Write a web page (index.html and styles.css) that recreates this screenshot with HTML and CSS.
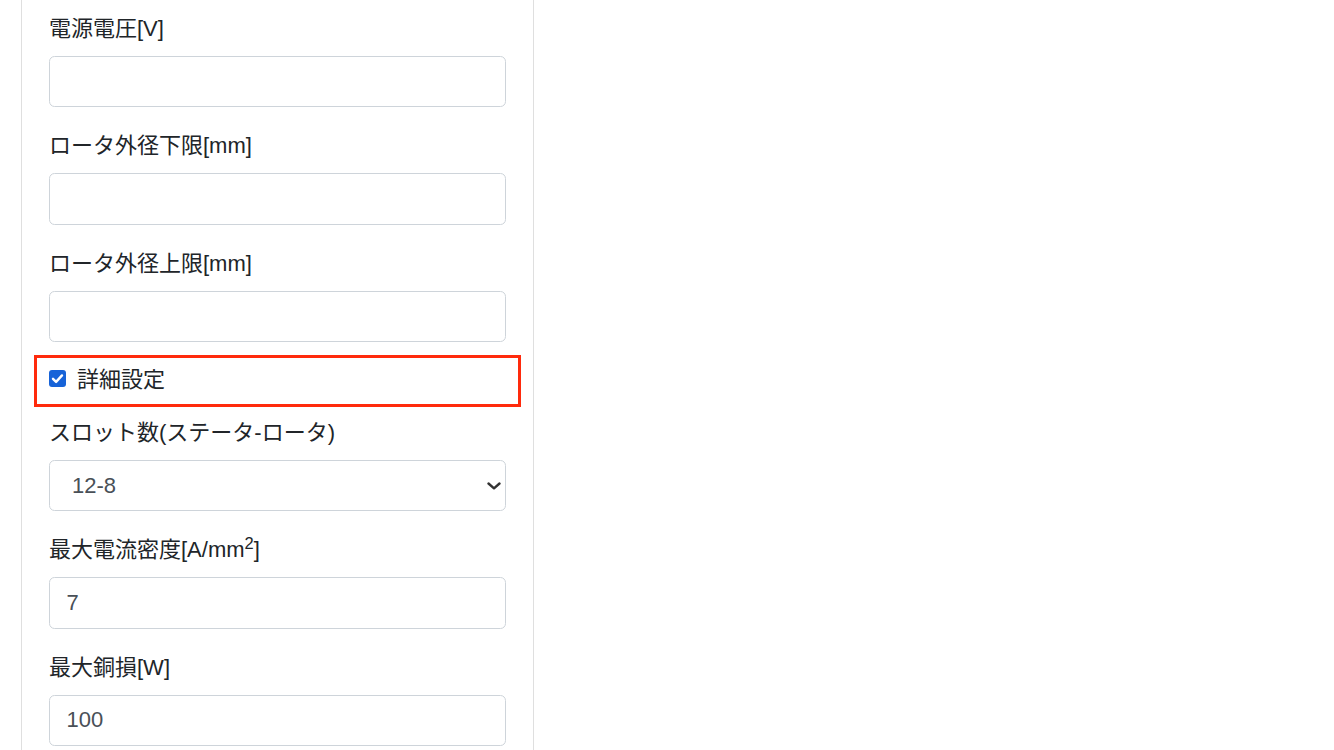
FILE: index.html
```html
<!DOCTYPE html>
<html lang="ja">
<head>
<meta charset="utf-8">
<title>設定</title>
<link rel="stylesheet" href="styles.css">
</head>
<body>
<div class="panel">
  <div class="form-group">
    <label class="field-label">電源電圧[V]</label>
    <input class="form-control" type="text" value="">
  </div>
  <div class="form-group">
    <label class="field-label">ロータ外径下限[mm]</label>
    <input class="form-control" type="text" value="">
  </div>
  <div class="form-group">
    <label class="field-label">ロータ外径上限[mm]</label>
    <input class="form-control" type="text" value="">
  </div>
  <div class="form-check">
    <span class="check-box">
      <svg viewBox="0 0 17 17" width="17" height="17"><path d="M4 8.8 L7.1 11.9 L13 5.4" fill="none" stroke="#fff" stroke-width="2.4" stroke-linecap="round" stroke-linejoin="round"/></svg>
    </span>
    <span class="check-label">詳細設定</span>
    <span class="highlight"></span>
  </div>
  <div class="form-group">
    <label class="field-label">スロット数(ステータ-ロータ)</label>
    <div class="select-wrap">
      <div class="form-control select-control">12-8</div>
      <svg class="chevron" viewBox="0 0 14 8" width="14" height="8"><path d="M1.5 1.5 L7 6.3 L12.5 1.5" fill="none" stroke="#333" stroke-width="2.4" stroke-linecap="round" stroke-linejoin="round"/></svg>
    </div>
  </div>
  <div class="form-group">
    <label class="field-label">最大電流密度[A/mm<sup>2</sup>]</label>
    <input class="form-control" type="text" value="7">
  </div>
  <div class="form-group">
    <label class="field-label">最大銅損[W]</label>
    <input class="form-control" type="text" value="100">
  </div>
</div>
</body>
</html>
```

FILE: styles.css
```css
html, body {
  margin: 0;
  padding: 0;
  background: #fff;
}
body {
  font-family: "Liberation Sans", "Noto Sans CJK JP", sans-serif;
  font-size: 22px;
  line-height: 33px;
  color: #212529;
  overflow: hidden;
  height: 750px;
}
.panel {
  margin-left: 21px;
  width: 457px;
  padding: 11.5px 27px 0 27px;
  border-left: 1px solid #dfdfdf;
  border-right: 1px solid #dfdfdf;
  min-height: 760px;
  box-sizing: content-box;
}
.form-group {
  margin-bottom: 22px;
}
.field-label {
  display: block;
  height: 33px;
  margin-bottom: 11px;
}
.field-label sup {
  font-size: 75%;
  line-height: 0;
  position: relative;
  top: -0.5em;
  vertical-align: baseline;
}
.form-control {
  display: block;
  box-sizing: border-box;
  width: 100%;
  height: 51.5px;
  margin: 0;
  padding: 8px 16.5px;
  font-family: inherit;
  font-size: 22px;
  line-height: 33px;
  color: #495057;
  background: #fff;
  border: 1px solid #ced4da;
  border-radius: 5.5px;
  outline: none;
}
.select-wrap {
  position: relative;
}
.select-control {
  padding-left: 22px;
}
.chevron {
  position: absolute;
  right: 5px;
  top: 22px;
}
.form-check {
  position: relative;
  display: flex;
  align-items: flex-start;
  height: 33px;
  margin-bottom: 20px;
  margin-top: -1.5px;
}
.check-box {
  display: block;
  width: 17px;
  height: 17px;
  margin-top: 7px;
  margin-right: 11px;
  background: #1763d8;
  border-radius: 3px;
}
.check-box svg {
  display: block;
}
.highlight {
  position: absolute;
  left: -15px;
  right: -15px;
  top: -8px;
  bottom: -11px;
  border: 3px solid #ff2a0c;
  pointer-events: none;
}
```
